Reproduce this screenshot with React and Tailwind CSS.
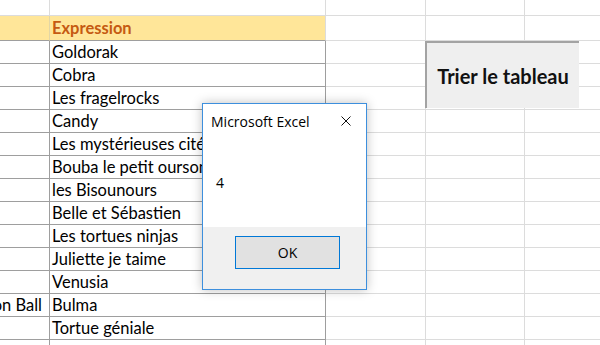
const rows = [
  ['', 'Goldorak'],
  ['', 'Cobra'],
  ['', 'Les fragelrocks'],
  ['', 'Candy'],
  ['', "Les mystérieuses cités d'or"],
  ['', 'Bouba le petit ourson'],
  ['', 'les Bisounours'],
  ['', 'Belle et Sébastien'],
  ['', 'Les tortues ninjas'],
  ['', 'Juliette je taime'],
  ['', 'Venusia'],
  ['on Ball', 'Bulma'],
  ['', 'Tortue géniale'],
  ['', ''],
]

function Grid({ w }) {
  return <div className={`${w} shrink-0 border-r border-b border-[#dcdcdc]`} />
}

function App() {
  return (
    <div className="relative w-[600px] h-[345px] overflow-hidden bg-white font-['Lato',sans-serif] text-[16.5px] text-black">

      {/* top blank row */}
      <div className="flex h-[16px]">
        <Grid w="w-[50px]" />
        <Grid w="w-[276px]" />
        <Grid w="w-[100px]" />
        <Grid w="w-[99px]" />
        <div className="flex-1 border-b border-[#dcdcdc]" />
      </div>

      {/* header */}
      <div className="flex h-[25px] leading-[24px]">
        <div className="w-[50px] shrink-0 bg-[#ffe699] border-r border-r-[#e2d6a6] border-b border-b-[#9e9e9e]" />
        <div className="w-[276px] shrink-0 bg-[#ffe699] border-r border-r-[#dcdcdc] border-b border-b-[#9e9e9e] pl-[2px] font-bold text-[#c55a11]">
          Expression
        </div>
        <Grid w="w-[100px]" />
        <Grid w="w-[99px]" />
        <div className="flex-1 border-b border-[#dcdcdc]" />
      </div>

      {/* data */}
      {rows.map(([a, b], i) => (
        <div key={i} className="flex h-[23px] leading-[22px]">
          <div className="w-[50px] shrink-0 flex justify-end whitespace-nowrap pr-[7px] border-r border-b border-[#9e9e9e]">
            {a}
          </div>
          <div className="w-[276px] shrink-0 overflow-hidden whitespace-nowrap pl-[2px] border-r border-b border-[#9e9e9e]">
            {b}
          </div>
          <Grid w="w-[100px]" />
          <Grid w="w-[99px]" />
          <div className="flex-1 border-b border-[#dcdcdc]" />
        </div>
      ))}

      {/* sheet button */}
      <div className="absolute left-[425px] top-[41px] w-[154px] h-[67px] bg-[#efefef] border-l-2 border-t-2 border-[#a3a3a3] flex items-center justify-center font-bold text-[20px] text-[#111]">
        Trier le tableau
      </div>

      {/* message box */}
      <div className="absolute left-[202px] top-[103px] w-[165px] h-[187px] bg-white border border-[#3d8fdd] shadow-[0_0_10px_rgba(0,0,0,0.25)] flex flex-col font-['Open_Sans',sans-serif] text-[14px] text-black">
        <div className="h-[34px] flex items-center justify-between pl-[8px] pr-[15px]">
          <span>Microsoft Excel</span>
          <svg width="10" height="10" viewBox="0 0 10 10" className="shrink-0">
            <path d="M0.5 0.5 L9.5 9.5 M9.5 0.5 L0.5 9.5" stroke="#111" strokeWidth="1" />
          </svg>
        </div>
        <div className="flex-1 flex items-center pl-[13px]">4</div>
        <div className="h-[62px] bg-[#f0f0f0] pt-[9px] pl-[32px]">
          <button className="w-[105px] h-[33px] bg-[#e1e1e1] border border-[#0078d7] flex items-center justify-center">
            OK
          </button>
        </div>
      </div>
    </div>
  )
}

export default App
